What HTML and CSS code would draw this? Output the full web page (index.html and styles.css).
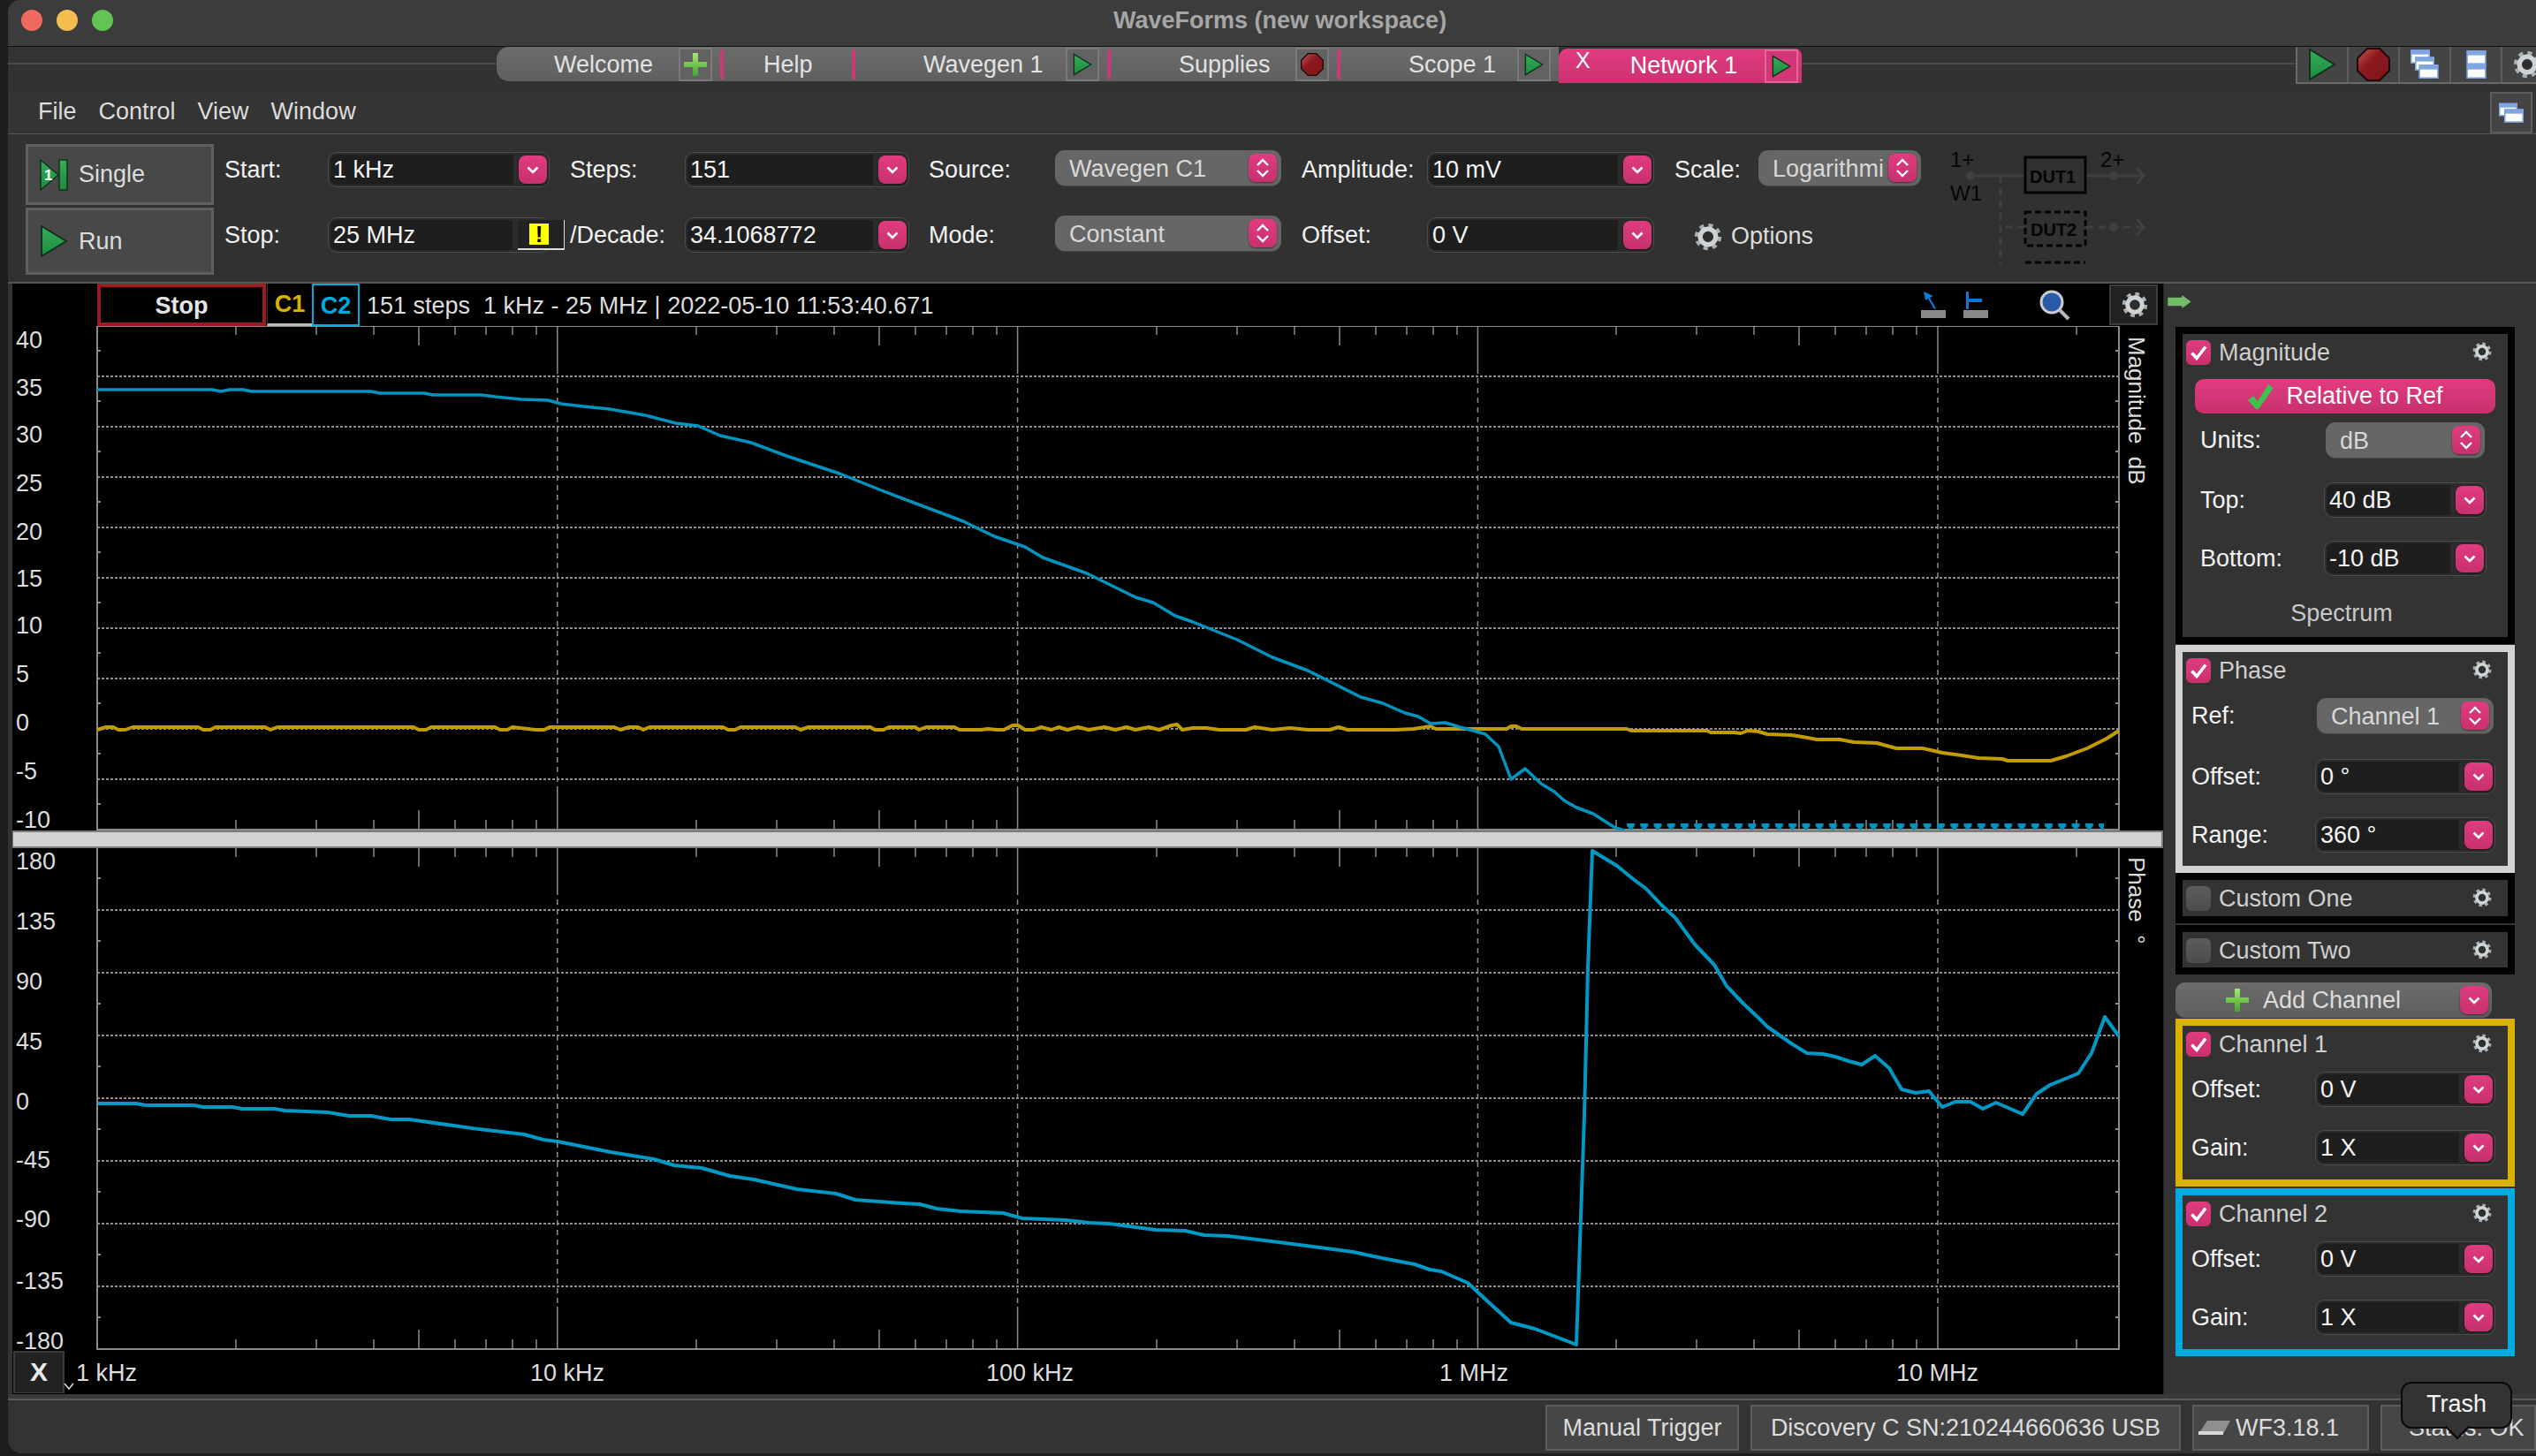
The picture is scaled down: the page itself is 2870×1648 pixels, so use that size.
FILE: index.html
```html
<!DOCTYPE HTML>
<html lang="en">
  <head>
    <title>WaveForms (new workspace)</title>
    <meta charset="utf-8">
    <link rel="stylesheet" href="styles.css">
  </head>
  <body>

  <svg class="sprite" aria-hidden="true">
    <defs>
      <linearGradient id="greenFill" x1="0" y1="0" x2="0" y2="1">
        <stop offset="0" stop-color="#35ad58"/>
        <stop offset="1" stop-color="#1c8a3e"/>
      </linearGradient>
      <linearGradient id="redFill" x1="0" y1="0" x2="1" y2="1">
        <stop offset="0" stop-color="#c85a5a"/>
        <stop offset="0.4" stop-color="#8e1a20"/>
        <stop offset="1" stop-color="#7c1418"/>
      </linearGradient>
      <linearGradient id="plusFill" x1="0" y1="0" x2="0" y2="1">
        <stop offset="0" stop-color="#a6e86a"/>
        <stop offset="1" stop-color="#3fa52e"/>
      </linearGradient>
      <pattern id="clipMarks" patternUnits="userSpaceOnUse" x="1841" y="930" width="15.26" height="12">
        <path d="M0 3h9v3l-4.500 5l-4.500 -5z" fill="#0093bd"/>
      </pattern>
    </defs>
    <symbol id="chev" viewBox="0 0 32 32"><path d="M10.500 13.500l5.500 5.500l5.500 -5.500" fill="none" stroke="#fff" stroke-width="2.600"/></symbol>
    <symbol id="spin" viewBox="0 0 32 32"><path d="M10 13l6 -6l6 6M10 19l6 6l6 -6" fill="none" stroke="#fff" stroke-width="2.400"/></symbol>
    <symbol id="tick" viewBox="0 0 28 28"><path d="M6.500 14.500l5.500 6l10 -13" fill="none" stroke="#fff" stroke-width="3.600"/></symbol>
    <symbol id="gear" viewBox="0 0 24 24">
      <circle cx="12" cy="12" r="9.600" fill="none" stroke="#a9b0b4" stroke-width="3.600" stroke-dasharray="3.770 3.770"/>
      <circle cx="12" cy="12" r="6.600" fill="none" stroke="#d0d3d5" stroke-width="4"/>
      <circle cx="12" cy="12" r="4" fill="#2e2e2e"/>
    </symbol>
    <symbol id="play" viewBox="0 0 32 36"><path d="M2 1l28 17l-28 17z" fill="url(#greenFill)" stroke="#12301c" stroke-width="2"/></symbol>
    <symbol id="stopHex" viewBox="0 0 38 38"><path d="M12 1h14l11 11v14l-11 11h-14l-11 -11v-14z" fill="url(#redFill)" stroke="#1d0a0a" stroke-width="2"/></symbol>
    <symbol id="plus" viewBox="0 0 28 28"><path d="M11 1h6v10h10v6h-10v10h-6v-10h-10v-6h10z" fill="url(#plusFill)"/></symbol>
    <symbol id="win" viewBox="0 0 28 20"><rect width="28" height="20" fill="#7fa6e0"/><rect x="2" y="7" width="24" height="11" fill="#fff"/></symbol>
  </svg>

  <div class="window">

    <div class="titlebar">
      <span class="light red"></span><span class="light amber"></span><span class="light green"></span>
      <div class="title">WaveForms (new workspace)</div>
    </div>

    <div class="tabbar">
      <div class="tabs">
        <div class="tab t-welcome"><span class="tab-name">Welcome</span><span class="tab-icon"><svg class="i-plus"><use href="#plus"/></svg></span></div>
        <div class="tab t-help"><span class="sliver"></span><span class="tab-name">Help</span></div>
        <div class="tab t-wave"><span class="sliver"></span><span class="tab-name">Wavegen 1</span><span class="tab-icon"><svg class="i-tabplay"><use href="#play"/></svg></span></div>
        <div class="tab t-sup"><span class="sliver"></span><span class="tab-name">Supplies</span><span class="tab-icon"><svg class="i-tabstop"><use href="#stopHex"/></svg></span></div>
        <div class="tab t-scope"><span class="sliver"></span><span class="tab-name">Scope 1</span><span class="tab-icon"><svg class="i-tabplay"><use href="#play"/></svg></span></div>
      </div>
      <div class="tab-active">
        <span class="tab-x">X</span><span class="tab-name">Network 1</span><span class="tab-icon"><svg class="i-tabplay"><use href="#play"/></svg></span>
      </div>
      <div class="globals">
        <span class="g-cell"><svg class="g-play"><use href="#play"/></svg></span>
        <span class="g-cell"><svg class="g-stop"><use href="#stopHex"/></svg></span>
        <span class="g-cell">
          <svg class="g-stack" viewBox="0 0 33 34">
            <use href="#win" width="22" height="16" x="0" y="0"/>
            <use href="#win" width="22" height="16" x="5" y="8"/>
            <use href="#win" width="23" height="16" x="9" y="17"/>
          </svg>
        </span>
        <span class="g-cell">
          <svg class="g-split" viewBox="0 0 25 32">
            <use href="#win" width="25" height="16" x="0" y="0"/>
            <use href="#win" width="25" height="16" x="0" y="16"/>
          </svg>
        </span>
        <span class="g-cell g-last"><svg class="g-gear"><use href="#gear"/></svg></span>
      </div>
    </div>

    <div class="menubar">
      <span class="menu">File</span>
      <span class="menu">Control</span>
      <span class="menu">View</span>
      <span class="menu">Window</span>
      <span class="float-btn">
        <svg class="g-float" viewBox="0 0 28 26">
          <use href="#win" width="21" height="18" x="0" y="0"/>
          <use href="#win" width="22" height="18" x="6" y="7"/>
        </svg>
      </span>
    </div>

    <div class="toolbar">
      <div class="run-col">
        <div class="run-btn single">
          <svg class="i-single" viewBox="0 0 32 38">
            <path d="M1 2l20 17l-20 17z" fill="url(#greenFill)" stroke="#12301c" stroke-width="1.500"/>
            <rect x="22" y="2" width="9" height="34" fill="url(#greenFill)" stroke="#12301c" stroke-width="1.500"/>
            <text x="5" y="25" class="one">1</text>
          </svg>
          <span>Single</span>
        </div>
        <div class="run-btn run">
          <svg class="i-run"><use href="#play"/></svg>
          <span>Run</span>
        </div>
      </div>

      <div class="ctl-grid">
        <span class="lbl">Start:</span>
        <div class="field f-a"><span class="val">1 kHz</span><span class="pink"><svg><use href="#chev"/></svg></span></div>
        <span class="lbl">Steps:</span>
        <div class="field f-b"><span class="val">151</span><span class="pink"><svg><use href="#chev"/></svg></span></div>
        <span class="lbl">Source:</span>
        <div class="drop f-c"><span class="drop-text">Wavegen C1</span><span class="pink"><svg><use href="#spin"/></svg></span></div>
        <span class="lbl">Amplitude:</span>
        <div class="field f-d"><span class="val">10 mV</span><span class="pink"><svg><use href="#chev"/></svg></span></div>
        <span class="lbl">Scale:</span>
        <div class="drop f-e"><span class="drop-text">Logarithmic</span><span class="pink"><svg><use href="#spin"/></svg></span></div>

        <span class="lbl">Stop:</span>
        <div class="field f-a"><span class="val">25 MHz</span><span class="warn"><span class="warn-mark">!</span></span></div>
        <span class="lbl">/Decade:</span>
        <div class="field f-b"><span class="val">34.1068772</span><span class="pink"><svg><use href="#chev"/></svg></span></div>
        <span class="lbl">Mode:</span>
        <div class="drop f-c"><span class="drop-text">Constant</span><span class="pink"><svg><use href="#spin"/></svg></span></div>
        <span class="lbl">Offset:</span>
        <div class="field f-d"><span class="val">0 V</span><span class="pink"><svg><use href="#chev"/></svg></span></div>
        <div class="options"><svg class="i-options"><use href="#gear"/></svg><span>Options</span></div>
      </div>

      <svg class="diagram" viewBox="2207 165 230 136">
        <path d="M2230 200H2291M2361 200H2426" class="wire"/>
        <path d="M2418 191l8 9l-8 9" class="wire"/>
        <path d="M2264 200V300M2270 258H2291M2361 258H2426" class="wire dashed"/>
        <path d="M2418 249l8 9l-8 9" class="wire"/>
        <circle cx="2230" cy="200" r="5" class="node"/>
        <circle cx="2392" cy="200" r="5" class="node"/>
        <circle cx="2392" cy="258" r="5" class="node"/>
        <rect x="2292" y="179" width="68" height="40" class="dut"/>
        <rect x="2292" y="241" width="68" height="38" class="dut dashed"/>
        <path d="M2292 298H2360" class="dut dashed"/>
        <text x="2207" y="190" class="dia-text">1+</text>
        <text x="2207" y="228" class="dia-text">W1</text>
        <text x="2377" y="190" class="dia-text">2+</text>
        <text x="2297" y="208" class="dia-small">DUT1</text>
        <text x="2298" y="268" class="dia-small">DUT2</text>
      </svg>
    </div>

    <div class="main">
      <div class="plot-col">
        <div class="plot-head">
          <div class="stop-box">Stop</div>
          <div class="chan-box c1">C1</div>
          <div class="chan-box c2">C2</div>
          <div class="acq">151 steps&nbsp; 1 kHz - 25 MHz | 2022-05-10 11:53:40.671</div>
          <svg class="head-tool" viewBox="0 0 30 32">
            <path d="M4 1l2 10l3 -2l7 12l2 -1l-7 -12l4 -2z" fill="#0a78d8"/>
            <rect x="1" y="22" width="28" height="9" fill="#8a8a8a"/>
          </svg>
          <svg class="head-tool" viewBox="0 0 30 32">
            <path d="M4 1h3v8h15v4h-15v8h-3z" fill="#0a78d8"/>
            <rect x="1" y="22" width="28" height="9" fill="#8a8a8a"/>
          </svg>
          <svg class="head-zoom" viewBox="0 0 36 36">
            <circle cx="15" cy="15" r="12" fill="#2a5ba8" stroke="#c8ccd0" stroke-width="3"/>
            <path d="M24 24l10 10" stroke="#b8b8b8" stroke-width="4"/>
          </svg>
          <span class="head-gear"><svg><use href="#gear"/></svg></span>
        </div>

        <svg class="chart" viewBox="14 370 2434 1208">
          <!-- grid -->
          <path class="grid-h" d="M110 427H2398M110 484H2398M110 541H2398M110 598H2398M110 655H2398M110 712H2398M110 769H2398M110 826H2398M110 883H2398"/>
          <path class="grid-h" d="M110 1031H2398M110 1102H2398M110 1173H2398M110 1244H2398M110 1315H2398M110 1386H2398M110 1457H2398"/>
          <path class="grid-v" d="M630.800 418V892M1151.600 418V892M1672.400 418V892M2193 418V892M630.800 1008V1480M1151.600 1008V1480M1672.400 1008V1480M2193 1008V1480"/>

          <!-- axis ticks -->
          <path class="tick" d="M630.800 370V418M1151.600 370V418M1672.400 370V418M2193 370V418M630.800 892V940M1151.600 892V940M1672.400 892V940M2193 892V940M630.800 960V1008M1151.600 960V1008M1672.400 960V1008M2193 960V1008M630.800 1480V1528M1151.600 1480V1528M1672.400 1480V1528M2193 1480V1528"/>
          <path class="tick" d="M267 370v10M358 370v10M423 370v10M515 370v10M550 370v10M580 370v10M607 370v10M788 370v10M879 370v10M944 370v10M1036 370v10M1071 370v10M1101 370v10M1128 370v10M1309 370v10M1400 370v10M1465 370v10M1557 370v10M1592 370v10M1622 370v10M1649 370v10M1829 370v10M1920 370v10M1985 370v10M2077 370v10M2112 370v10M2142 370v10M2169 370v10M2350 370v10"/>
          <path class="tick" d="M474 370v22M995 370v22M1516 370v22M2036 370v22"/>
          <path class="tick" d="M267 929v11M358 929v11M423 929v11M515 929v11M550 929v11M580 929v11M607 929v11M788 929v11M879 929v11M944 929v11M1036 929v11M1071 929v11M1101 929v11M1128 929v11M1309 929v11M1400 929v11M1465 929v11M1557 929v11M1592 929v11M1622 929v11M1649 929v11M1829 929v11M1920 929v11M1985 929v11M2077 929v11M2112 929v11M2142 929v11M2169 929v11M2350 929v11"/>
          <path class="tick" d="M474 918v22M995 918v22M1516 918v22M2036 918v22"/>
          <path class="tick" d="M267 960v11M358 960v11M423 960v11M515 960v11M550 960v11M580 960v11M607 960v11M788 960v11M879 960v11M944 960v11M1036 960v11M1071 960v11M1101 960v11M1128 960v11M1309 960v11M1400 960v11M1465 960v11M1557 960v11M1592 960v11M1622 960v11M1649 960v11M1829 960v11M1920 960v11M1985 960v11M2077 960v11M2112 960v11M2142 960v11M2169 960v11M2350 960v11"/>
          <path class="tick" d="M474 960v22M995 960v22M1516 960v22M2036 960v22"/>
          <path class="tick" d="M267 1517v11M358 1517v11M423 1517v11M515 1517v11M550 1517v11M580 1517v11M607 1517v11M788 1517v11M879 1517v11M944 1517v11M1036 1517v11M1071 1517v11M1101 1517v11M1128 1517v11M1309 1517v11M1400 1517v11M1465 1517v11M1557 1517v11M1592 1517v11M1622 1517v11M1649 1517v11M1829 1517v11M1920 1517v11M1985 1517v11M2077 1517v11M2112 1517v11M2142 1517v11M2169 1517v11M2350 1517v11"/>
          <path class="tick" d="M474 1506v22M995 1506v22M1516 1506v22M2036 1506v22"/>
          <path class="tick-y" d="M110 398h4M110 455h4M110 512h4M110 569h4M110 626h4M110 683h4M110 740h4M110 797h4M110 854h4M110 911h4M110 995h4M110 1066h4M110 1137h4M110 1208h4M110 1279h4M110 1350h4M110 1421h4M110 1492h4M2394 398h4M2394 455h4M2394 512h4M2394 569h4M2394 626h4M2394 683h4M2394 740h4M2394 797h4M2394 854h4M2394 911h4M2394 995h4M2394 1066h4M2394 1137h4M2394 1208h4M2394 1279h4M2394 1350h4M2394 1421h4M2394 1492h4"/>

          <!-- axis frame -->
          <path class="frame" d="M110 370H2398V940H110zM110 960H2398V1528H110z"/>

          <!-- magnitude traces -->
          <polyline class="trace-y" points="110,827 120,824 128,824 134,827 142,827 150,824 224,824 230,827 238,827 244,824 300,824 306,827 314,824 468,824 474,827 482,827 488,824 560,824 566,827 574,827 580,824 606,827 616,827 622,824 695,824 702,827 712,824 722,824 728,827 735,824 818,824 824,827 832,827 838,824 900,824 906,827 915,824 985,824 990,827 1000,827 1006,824 1036,824 1040,827 1048,824 1080,824 1086,827 1096,827 1102,827 1110,827 1118,826 1128,827 1136,827 1146,822 1152,822 1160,827 1170,827 1178,824 1190,827 1198,824 1208,827 1220,824 1232,827 1250,824 1262,827 1275,824 1285,827 1300,824 1312,827 1326,822 1332,821 1338,827 1350,825 1365,825 1380,827 1410,827 1420,824 1440,827 1460,825 1480,827 1505,827 1515,824 1525,827 1540,827 1580,827 1600,826 1619,823 1625,826 1700,826 1705,826 1710,823 1716,823 1722,826 1841,826 1846,828 1932,828 1936,830 1962,830 1970,831 1978,828 1990,829 2000,832 2027,833 2040,835 2056,838 2082,838 2098,841 2124,842 2146,848 2176,848 2198,853 2220,856 2239,859 2266,860 2272,862 2321,862 2338,857 2362,848 2384,837 2398,828"/>
          <polyline class="trace-b" points="110,442 240,442 250,444 260,442 275,442 285,444 420,444 430,446 480,446 490,448 545,448 560,450 590,453 620,454 635,458 660,461 690,464 730,471 765,480 790,483 815,494 850,502 890,517 950,537 1000,557 1090,591 1125,608 1160,620 1180,632 1230,650 1285,677 1305,683 1330,698 1350,705 1400,725 1440,745 1480,760 1540,790 1565,797 1590,808 1605,812 1619,820 1636,819 1652,824 1671,829 1681,832 1696,846 1710,883 1726,871 1744,888 1759,897 1770,907 1784,915 1803,922 1828,938 1839,941"/>
          <rect x="1841" y="930" width="540" height="12" fill="url(#clipMarks)"/>

          <!-- phase trace -->
          <polyline class="trace-p" points="111,1250 154,1250 165,1252 219,1252 230,1254 263,1254 274,1256 311,1256 322,1258 371,1260 395,1264 420,1264 442,1268 463,1268 534,1278 593,1285 615,1291 631,1293 691,1305 740,1313 763,1320 794,1323 826,1332 853,1336 902,1347 946,1352 968,1359 1022,1363 1041,1364 1060,1369 1087,1372 1135,1374 1157,1380 1206,1382 1233,1385 1255,1386 1308,1393 1341,1394 1363,1399 1390,1400 1455,1408 1531,1418 1564,1425 1601,1432 1618,1438 1631,1440 1661,1453 1688,1478 1710,1498 1737,1505 1784,1523 1793,1263 1797,1097 1802,964 1830,981 1847,995 1863,1007 1880,1025 1896,1040 1918,1070 1940,1093 1954,1117 1973,1137 1990,1153 2000,1163 2027,1182 2045,1193 2063,1194 2077,1197 2092,1202 2107,1206 2122,1196 2138,1210 2152,1234 2168,1238 2183,1236 2198,1254 2213,1248 2230,1248 2244,1256 2259,1249 2289,1262 2305,1239 2320,1229 2352,1216 2367,1193 2382,1152 2398,1174"/>

          <!-- sash between the plots -->
          <rect class="sash" x="14" y="942" width="2433" height="18"/>

          <!-- axis labels -->
          <text class="ax" x="18" y="395">40</text>
          <text class="ax" x="18" y="449">35</text>
          <text class="ax" x="18" y="502">30</text>
          <text class="ax" x="18" y="557">25</text>
          <text class="ax" x="18" y="612">20</text>
          <text class="ax" x="18" y="665">15</text>
          <text class="ax" x="18" y="718">10</text>
          <text class="ax" x="18" y="773">5</text>
          <text class="ax" x="18" y="828">0</text>
          <text class="ax" x="18" y="883">-5</text>
          <text class="ax" x="18" y="938">-10</text>
          <text class="ax" x="18" y="985">180</text>
          <text class="ax" x="18" y="1053">135</text>
          <text class="ax" x="18" y="1121">90</text>
          <text class="ax" x="18" y="1189">45</text>
          <text class="ax" x="18" y="1257">0</text>
          <text class="ax" x="18" y="1323">-45</text>
          <text class="ax" x="18" y="1390">-90</text>
          <text class="ax" x="18" y="1460">-135</text>
          <text class="ax" x="18" y="1528">-180</text>

          <text class="ax" x="86" y="1564">1 kHz</text>
          <text class="ax" x="600" y="1564">10 kHz</text>
          <text class="ax" x="1116" y="1564">100 kHz</text>
          <text class="ax" x="1629" y="1564">1 MHz</text>
          <text class="ax" x="2146" y="1564">10 MHz</text>

          <text class="ax side" transform="translate(2409 382) rotate(90)">Magnitude&#160;&#160;dB</text>
          <text class="ax side" transform="translate(2409 971) rotate(90)">Phase&#160;&#160;°</text>

          <!-- x axis corner -->
          <rect x="16" y="1531" width="56" height="47" fill="#222" stroke="#3a3a3a" stroke-width="2"/>
          <text class="x-corner" x="34" y="1564">X</text>
          <path d="M73 1567l5 6l5 -6" fill="none" stroke="#ddd" stroke-width="1.500"/>
        </svg>
      </div>

      <div class="side-panel">
        <svg class="collapse" viewBox="0 0 28 16">
          <path d="M0 3h17v-3l11 8l-11 8v-3h-17z" fill="#74bd68"/>
        </svg>

        <div class="group g-black mag">
          <div class="head">
            <span class="check"><svg><use href="#tick"/></svg></span>
            <span class="head-name">Magnitude</span>
            <svg class="head-cog"><use href="#gear"/></svg>
          </div>
          <div class="rel-btn">
            <svg class="i-check" viewBox="0 0 30 28"><path d="M1 18l6 -5l5 6l12 -19l6 4l-17 24h-3z" fill="#3fc04f"/></svg>
            <span>Relative to Ref</span>
          </div>
          <div class="prow r-units"><span class="plabel">Units:</span><div class="drop"><span class="drop-text">dB</span><span class="pink"><svg><use href="#spin"/></svg></span></div></div>
          <div class="prow r-top"><span class="plabel">Top:</span><div class="field"><span class="val">40 dB</span><span class="pink"><svg><use href="#chev"/></svg></span></div></div>
          <div class="prow r-bottom"><span class="plabel">Bottom:</span><div class="field"><span class="val">-10 dB</span><span class="pink"><svg><use href="#chev"/></svg></span></div></div>
          <div class="spectrum">Spectrum</div>
        </div>

        <div class="group g-white phase">
          <div class="head">
            <span class="check"><svg><use href="#tick"/></svg></span>
            <span class="head-name">Phase</span>
            <svg class="head-cog"><use href="#gear"/></svg>
          </div>
          <div class="prow r-ref"><span class="plabel">Ref:</span><div class="drop"><span class="drop-text">Channel 1</span><span class="pink"><svg><use href="#spin"/></svg></span></div></div>
          <div class="prow r-offset"><span class="plabel">Offset:</span><div class="field"><span class="val">0 °</span><span class="pink"><svg><use href="#chev"/></svg></span></div></div>
          <div class="prow r-range"><span class="plabel">Range:</span><div class="field"><span class="val">360 °</span><span class="pink"><svg><use href="#chev"/></svg></span></div></div>
        </div>

        <div class="group g-black custom">
          <div class="head">
            <span class="check off"></span>
            <span class="head-name">Custom One</span>
            <svg class="head-cog"><use href="#gear"/></svg>
          </div>
        </div>
        <div class="group g-black custom custom2">
          <div class="head">
            <span class="check off"></span>
            <span class="head-name">Custom Two</span>
            <svg class="head-cog"><use href="#gear"/></svg>
          </div>
        </div>

        <div class="add-chan">
          <svg class="i-add"><use href="#plus"/></svg>
          <span>Add Channel</span>
          <span class="pink"><svg><use href="#chev"/></svg></span>
        </div>

        <div class="group g-gold chan">
          <div class="head">
            <span class="check"><svg><use href="#tick"/></svg></span>
            <span class="head-name">Channel 1</span>
            <svg class="head-cog"><use href="#gear"/></svg>
          </div>
          <div class="prow r-chan1"><span class="plabel">Offset:</span><div class="field"><span class="val">0 V</span><span class="pink"><svg><use href="#chev"/></svg></span></div></div>
          <div class="prow r-chan2"><span class="plabel">Gain:</span><div class="field"><span class="val">1 X</span><span class="pink"><svg><use href="#chev"/></svg></span></div></div>
        </div>

        <div class="group g-blue chan">
          <div class="head">
            <span class="check"><svg><use href="#tick"/></svg></span>
            <span class="head-name">Channel 2</span>
            <svg class="head-cog"><use href="#gear"/></svg>
          </div>
          <div class="prow r-chan1"><span class="plabel">Offset:</span><div class="field"><span class="val">0 V</span><span class="pink"><svg><use href="#chev"/></svg></span></div></div>
          <div class="prow r-chan2"><span class="plabel">Gain:</span><div class="field"><span class="val">1 X</span><span class="pink"><svg><use href="#chev"/></svg></span></div></div>
        </div>
      </div>
    </div>

    <div class="statusbar">
      <div class="stat s-trigger">Manual Trigger</div>
      <div class="stat s-device">Discovery C SN:210244660636 USB</div>
      <div class="stat s-version">
        <svg class="i-board" viewBox="0 0 36 18"><path d="M10 1h26l-8 15h-28z" fill="#8f8f8f"/><path d="M0 13h28v4h-28z" fill="#d8d8d8"/></svg>
        <span>WF3.18.1</span>
      </div>
      <div class="stat s-status">Status: OK</div>
      <div class="tooltip">Trash</div>
    </div>

  </div>

  </body>
</html>
```

FILE: styles.css
```css
html, body {
  margin: 0;
  padding: 0;
  width: 2870px;
  height: 1648px;
  overflow: hidden;
  background: #1d1d1d;
  color: #e6e6e6;
  font-family: "Liberation Sans", Arial, sans-serif;
  font-size: 27px;
}

.sprite {
  width: 0;
  height: 0;
  position: absolute;
}

.window {
  margin-left: 9px;
  width: 2861px;
  height: 1645px;
  display: flex;
  flex-direction: column;
  background: #333;
  border-radius: 14px 0 0 16px;
  overflow: hidden;
}

/* title bar */
.titlebar {
  height: 52px;
  flex: none;
  display: flex;
  align-items: center;
  padding-left: 15px;
  gap: 16px;
  background: #3c3c3c;
  border-bottom: 1px solid #111;
  box-sizing: content-box;
}
.light {
  width: 24px;
  height: 24px;
  border-radius: 50%;
  margin-top: -6px;
}
.light.red { background: #ee6a5f; }
.light.amber { background: #f5bd4f; }
.light.green { background: #61c454; }
.title {
  margin-left: 1116px;
  margin-top: -6px;
  font-weight: bold;
  font-size: 27px;
  color: #a6a6a6;
  white-space: nowrap;
}

/* tabs */
.tabbar {
  height: 51px;
  flex: none;
  display: flex;
  align-items: flex-start;
  padding-left: 553px;
  background: linear-gradient(#333 0, #333 18px, #4a4a4a 18px, #4a4a4a 20px, #323232 20px);
}
.tabs {
  display: flex;
  height: 39px;
  background: linear-gradient(#6c6c6c, #5f5f5f);
  border-radius: 14px 0 0 14px;
}
.tab {
  display: flex;
  align-items: center;
  color: #e2e2e2;
}
.tab-name {
  white-space: nowrap;
  padding-top: 2px;
}
.tab-icon {
  box-sizing: border-box;
  width: 38px;
  height: 38px;
  margin-left: auto;
  margin-right: 9px;
  display: flex;
  align-items: center;
  justify-content: center;
  background: #626262;
  border: 2px solid #7a7a7a;
}
.sliver {
  width: 4px;
  height: 34px;
  flex: none;
  background: #cf3876;
  border-radius: 4px 0 0 4px;
}
.t-welcome { width: 253px; }
.t-welcome .tab-name { margin-left: 65px; }
.t-help { width: 149px; }
.t-help .tab-name { margin-left: 45px; }
.t-wave { width: 289px; }
.t-wave .tab-name { margin-left: 77px; }
.t-sup { width: 260px; }
.t-sup .tab-name { margin-left: 77px; }
.t-scope { width: 251px; }
.t-scope .tab-name { margin-left: 77px; }
.i-plus { width: 28px; height: 28px; }
.i-tabplay { width: 22px; height: 30px; }
.i-tabstop { width: 26px; height: 36px; }

.tab-active {
  width: 275px;
  height: 39px;
  margin-top: 2px;
  display: flex;
  align-items: center;
  color: #fff;
  background: linear-gradient(#e03c80, #cb3270);
  border-radius: 10px 8px 0 0;
}
.tab-active .tab-name { padding-top: 0; margin-left: 45px; }
.tab-x {
  margin-left: 19px;
  margin-top: -12px;
  font-size: 25px;
}
.tab-active .tab-icon {
  margin-right: 4px;
  background: #d23675;
  border-color: #e0679a;
}

.globals {
  margin-left: auto;
  height: 40px;
  display: flex;
  border-left: 2px solid #6a6a6a;
  border-bottom: 2px solid #6a6a6a;
  background: #444;
}
.g-cell {
  width: 56px;
  display: flex;
  align-items: center;
  justify-content: center;
  border-right: 2px solid #5e5e5e;
}
.g-cell.g-last {
  width: 38px;
  border-right: 0;
  justify-content: flex-start;
  padding-left: 12px;
  box-sizing: border-box;
}
.g-play { width: 32px; height: 36px; }
.g-stop { width: 38px; height: 38px; }
.g-stack { width: 33px; height: 34px; }
.g-split { width: 25px; height: 32px; }
.g-gear { width: 32px; height: 32px; flex: none; }

/* menu */
.menubar {
  height: 48px;
  flex: none;
  display: flex;
  align-items: center;
  padding-left: 34px;
  gap: 25px;
  background: #343434;
  border-bottom: 1px solid #565656;
  color: #dcdcdc;
  box-sizing: border-box;
}
.menu { margin-top: -3px; }
.float-btn {
  margin-left: auto;
  margin-right: 4px;
  width: 48px;
  height: 47px;
  box-sizing: border-box;
  display: flex;
  align-items: center;
  justify-content: center;
  background: #444;
  border: 2px solid #5c5c5c;
}
.g-float { width: 28px; height: 26px; }

/* toolbar */
.toolbar {
  height: 169px;
  flex: none;
  display: flex;
  padding-left: 20px;
  box-sizing: border-box;
  background: #313131;
  border-bottom: 2px solid #555;
}
.run-col {
  width: 213px;
  padding-top: 11px;
  display: flex;
  flex-direction: column;
  gap: 3px;
  flex: none;
}
.run-btn {
  box-sizing: border-box;
  display: flex;
  align-items: center;
  padding-left: 13px;
  gap: 12px;
  background: #484848;
  border: 3px solid #5f5f5f;
  color: #dcdcdc;
}
.run-btn.single { height: 69px; }
.run-btn.run { height: 76px; }
.i-single { width: 32px; height: 38px; flex: none; }
.i-run { width: 32px; height: 36px; flex: none; }
.one {
  font-size: 17px;
  font-weight: bold;
  fill: #fff;
}

.ctl-grid {
  margin-left: 12px;
  padding-top: 3px;
  display: grid;
  grid-template-columns: 117px 274px 130px 276px 143px 279px 142px 280px 95px 217px;
  grid-template-rows: 74px 74px;
  align-items: center;
  flex: none;
  width: 1953px;
}
.lbl {
  color: #f2f2f2;
  white-space: nowrap;
}

.field {
  box-sizing: border-box;
  height: 40px;
  display: flex;
  align-items: center;
  padding: 2px;
  background: #2b2b2b;
  border: 1px solid #4c4c4c;
  border-radius: 10px;
}
.val {
  flex: 1;
  height: 100%;
  margin-right: 6px;
  display: flex;
  align-items: center;
  padding-left: 3px;
  background: #1e1e1e;
  border-radius: 7px 0 0 7px;
  color: #f4f4f4;
  white-space: nowrap;
}
.pink {
  width: 32px;
  height: 32px;
  flex: none;
  display: block;
  background: linear-gradient(#e03c80, #c8306e);
  border-radius: 8px;
  box-shadow: 0 1px 2px rgba(0,0,0,0.5);
}
.pink svg {
  display: block;
  width: 32px;
  height: 32px;
}
.f-a { width: 251px; }
.f-b { width: 254px; }
.f-c { width: 256px; }
.f-d { width: 257px; }
.f-e { width: 184px; }

.drop {
  box-sizing: border-box;
  height: 40px;
  display: flex;
  align-items: center;
  padding: 0 5px 0 16px;
  background: #666;
  border-radius: 11px;
  color: #d8d8d8;
  box-shadow: 0 1px 1px #4a4a4a;
}
.ctl-grid .drop { margin-top: -4px; }
.drop-text {
  flex: 1;
  overflow: hidden;
  white-space: nowrap;
  margin-right: 4px;
  padding-top: 2px;
}

.warn {
  box-sizing: border-box;
  width: 53px;
  height: 34px;
  margin-right: -20px;
  flex: none;
  display: flex;
  align-items: center;
  justify-content: center;
  padding-right: 4px;
  background: #222;
  border-right: 1px solid #ddd;
  border-bottom: 2px solid #ddd;
}
.warn-mark {
  width: 22px;
  height: 24px;
  background: #ff0;
  color: #000;
  font-weight: bold;
  font-size: 26px;
  line-height: 24px;
  text-align: center;
}

.options {
  grid-column: span 2;
  display: flex;
  align-items: center;
  padding-left: 22px;
  padding-top: 3px;
  gap: 10px;
  color: #dcdcdc;
}
.i-options { width: 32px; height: 34px; flex: none; }

.diagram {
  width: 230px;
  height: 136px;
  flex: none;
  margin-top: 12px;
}
.wire {
  fill: none;
  stroke: #404040;
  stroke-width: 3;
}
.wire.dashed { stroke-dasharray: 8 6; }
.node { fill: #404040; }
.dut {
  fill: none;
  stroke: #050505;
  stroke-width: 3;
}
.dut.dashed { stroke-dasharray: 7 4; }
.dia-text {
  font-size: 24px;
  fill: #050505;
}
.dia-small {
  font-size: 20px;
  font-weight: bold;
  fill: #050505;
}

/* plots */
.main {
  flex: 1;
  display: flex;
  min-height: 0;
}
.plot-col {
  margin-left: 5px;
  width: 2434px;
  flex: none;
  background: #000;
  display: flex;
  flex-direction: column;
}
.plot-head {
  height: 48px;
  flex: none;
  display: flex;
  align-items: center;
  padding-left: 96px;
}
.stop-box {
  box-sizing: border-box;
  width: 191px;
  height: 48px;
  border: 4px solid #9c1c22;
  font-weight: bold;
  text-align: center;
  line-height: 42px;
  color: #e4e4e4;
}
.chan-box {
  box-sizing: border-box;
  height: 48px;
  line-height: 46px;
  font-weight: bold;
  text-align: center;
}
.chan-box.c1 {
  width: 51px;
  margin-left: 1px;
  color: #d9b200;
  border-bottom: 3px solid #bbb;
  border-left: 1px solid #333;
}
.chan-box.c2 {
  width: 54px;
  color: #00aade;
  border: 2px solid #00aade;
}
.acq {
  margin-left: 8px;
  padding-top: 2px;
  color: #dcdcdc;
  white-space: nowrap;
  width: 1758px;
}
.head-tool {
  width: 30px;
  height: 32px;
  flex: none;
  margin-right: 18px;
}
.head-zoom {
  width: 36px;
  height: 36px;
  flex: none;
  margin-left: 38px;
}
.head-gear {
  margin-left: 44px;
  box-sizing: border-box;
  width: 55px;
  height: 46px;
  flex: none;
  display: flex;
  align-items: center;
  justify-content: center;
  padding-left: 3px;
  background: #222;
  border: 2px solid #3c3c3c;
}
.head-gear svg { width: 30px; height: 36px; }

.chart {
  display: block;
  width: 2434px;
  height: 1208px;
  flex: none;
}
.grid-h {
  fill: none;
  stroke: #8e8e8e;
  stroke-width: 2;
  stroke-dasharray: 3 2;
}
.grid-v {
  fill: none;
  stroke: #8e8e8e;
  stroke-width: 1.500;
  stroke-dasharray: 6 5;
}
.tick {
  fill: none;
  stroke: #8a8a8a;
  stroke-width: 1.500;
}
.tick-y {
  fill: none;
  stroke: #8a8a8a;
  stroke-width: 2;
}
.frame {
  fill: none;
  stroke: #8a8a8a;
  stroke-width: 2;
}
.trace-y, .trace-b, .trace-p {
  fill: none;
  stroke-linejoin: round;
}
.trace-y {
  stroke: #c09c00;
  stroke-width: 4;
}
.trace-b {
  stroke: #0094bf;
  stroke-width: 3.500;
}
.trace-p {
  stroke: #0099c6;
  stroke-width: 4;
}
.sash {
  fill: #d2d2d2;
  stroke: #7c7c7c;
  stroke-width: 2;
}
.ax {
  font-size: 27px;
  fill: #dcdcdc;
}
.ax.side { font-size: 26px; }
.x-corner {
  font-size: 30px;
  font-weight: bold;
  fill: #e8e8e8;
}

/* right hand panel */
.side-panel {
  flex: 1;
  padding: 13px 0 0 6px;
  border-left: 1px solid #222;
  display: flex;
  flex-direction: column;
  align-items: flex-start;
}
.collapse {
  width: 27px;
  height: 15px;
  flex: none;
  margin-bottom: 21px;
  margin-left: -2px;
}
.group {
  box-sizing: border-box;
  width: 384px;
  margin-left: 7px;
  border-width: 8px;
  border-style: solid;
  background: #333;
  flex: none;
}
.g-black { border-color: #000; }
.g-white { border-color: #d2d2d2; }
.g-gold { border-color: #d9b200; }
.g-blue { border-color: #00aade; }

.head {
  height: 42px;
  display: flex;
  align-items: center;
  padding-left: 4px;
}
.check {
  width: 28px;
  height: 28px;
  flex: none;
  border-radius: 6px;
  background: linear-gradient(#e03c80, #c8306e);
}
.check svg { display: block; width: 28px; height: 28px; }
.check.off { background: linear-gradient(#5c5c5c, #4c4c4c); }
.head-name {
  margin-left: 9px;
  padding-top: 1px;
  color: #cfcfcf;
  white-space: nowrap;
}
.head-cog {
  width: 22px;
  height: 24px;
  margin-left: auto;
  margin-right: 18px;
  margin-top: -2px;
  flex: none;
}

.mag { height: 359px; }
.phase { height: 258px; margin-top: 1px; }
.custom { height: 57px; }
.custom2 { height: 56px; margin-top: 2px; }
.chan { height: 190px; }
.g-blue.chan { margin-top: 2px; }

.rel-btn {
  margin: 9px 14px 0 14px;
  height: 39px;
  display: flex;
  align-items: center;
  justify-content: center;
  gap: 14px;
  background: linear-gradient(#e03c80, #c8306e);
  border-radius: 10px;
  color: #fff;
}
.i-check { width: 30px; height: 28px; flex: none; }

.prow {
  height: 40px;
  display: flex;
  align-items: center;
  padding-left: 10px;
}
.plabel {
  width: 140px;
  flex: none;
  color: #f2f2f2;
}
.prow .field { width: 204px; }
.prow .drop { width: 200px; margin-left: 2px; }
.mag .prow { padding-left: 20px; }
.mag .prow .field { width: 184px; }
.mag .prow .drop { width: 180px; }

.r-units { margin-top: 10px; }
.r-top { margin-top: 28px; }
.r-bottom { margin-top: 26px; }
.spectrum {
  margin-top: 27px;
  text-align: center;
  padding-right: 8px;
  color: #c8c8c8;
}
.r-ref { margin-top: 10px; }
.r-offset { margin-top: 29px; }
.r-range { margin-top: 26px; }
.r-chan1 { margin-top: 10px; }
.r-chan2 { margin-top: 26px; }

.add-chan {
  box-sizing: border-box;
  width: 358px;
  height: 40px;
  margin: 9px 0 1px 7px;
  flex: none;
  display: flex;
  align-items: center;
  padding-left: 56px;
  gap: 15px;
  background: linear-gradient(#6c6c6c, #5e5e5e);
  border-radius: 11px;
  color: #dcdcdc;
}
.add-chan .pink { margin-left: auto; margin-right: 4px; }
.i-add { width: 28px; height: 28px; flex: none; }

/* status bar */
.statusbar {
  position: relative;
  height: 67px;
  flex: none;
  box-sizing: border-box;
  display: flex;
  justify-content: flex-end;
  gap: 13px;
  padding: 12px 0 3px;
  overflow: visible;
  background: linear-gradient(#3a3a3a 0, #3a3a3a 5px, #5a5a5a 5px, #5a5a5a 7px, #333 7px);
}
.stat {
  box-sizing: border-box;
  height: 52px;
  flex: none;
  display: flex;
  align-items: center;
  justify-content: center;
  background: #464646;
  border: 2px solid #5c5c5c;
  color: #dcdcdc;
  white-space: nowrap;
}
.s-trigger { width: 219px; }
.s-device { width: 487px; }
.s-version {
  width: 200px;
  gap: 6px;
  justify-content: flex-start;
  padding-left: 5px;
}
.s-status { width: 176px; justify-content: flex-start; padding-left: 30px; }
.i-board { width: 36px; height: 18px; flex: none; }

.tooltip {
  position: absolute;
  left: 2708px;
  top: -14px;
  box-sizing: border-box;
  width: 126px;
  height: 53px;
  text-align: center;
  line-height: 47px;
  color: #f4f4f4;
  background: #333;
  border: 2px solid #0a0a0a;
  border-radius: 12px;
}
.tooltip::after {
  content: "";
  position: absolute;
  left: 52px;
  bottom: -10px;
  width: 18px;
  height: 18px;
  transform: rotate(45deg);
  background: #333;
  border-right: 2px solid #0a0a0a;
  border-bottom: 2px solid #0a0a0a;
}
```
